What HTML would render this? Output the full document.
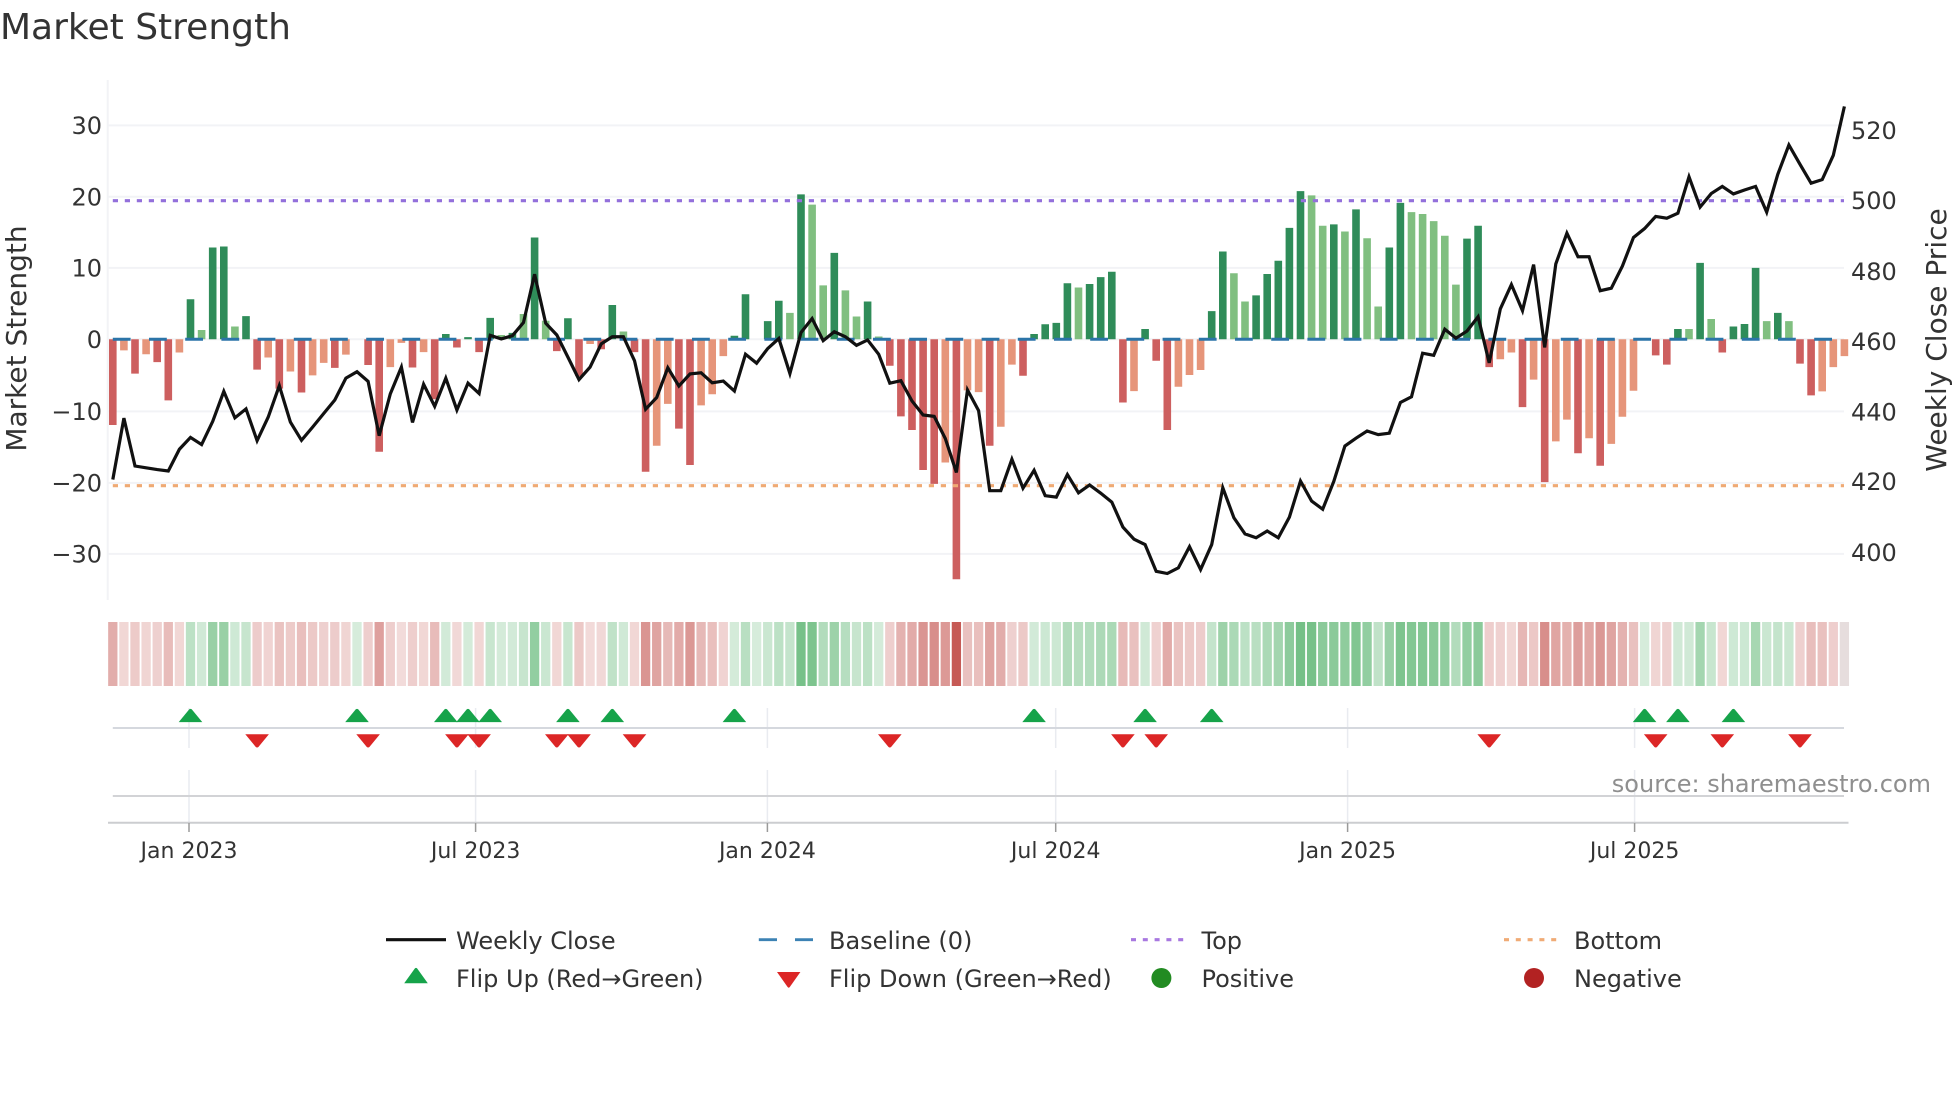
<!DOCTYPE html>
<html lang="en"><head><meta charset="utf-8"><title>Market Strength</title>
<style>
html,body{margin:0;padding:0;background:#fff;width:1960px;height:1102px;overflow:hidden}
svg{display:block}
path,polyline,line{vector-effect:non-scaling-stroke}
text{font-family:"DejaVu Sans","Liberation Sans",sans-serif;fill:#333}
.t{font-size:24px}
.x{font-size:22px;text-anchor:middle}
.l{font-size:24px}
.r{stroke:#c65a55}
.g{stroke:#38a552}
</style></head><body>
<svg width="1960" height="1102" viewBox="0 0 1960 1102" xmlns="http://www.w3.org/2000/svg">
<defs>
<path id="u" d="M-11.8 13.4L-1.3 .7Q0 -.4 1.3 .7L11.8 13.4z" fill="#16a34a"/>
<path id="d" d="M-11.8 0H11.8L1.3 12.7Q0 13.8 -1.3 12.7z" fill="#dc2626"/>
</defs>
<text x="0" y="39" style="font-size:36px">Market Strength</text>

<!-- grid -->
<g stroke="#f2f3f6" stroke-width="2" fill="none">
<line x1="107.7" y1="80" x2="107.7" y2="600"/>
<line x1="108" y1="125.4" x2="1844" y2="125.4"/>
<line x1="108" y1="196.8" x2="1844" y2="196.8"/>
<line x1="108" y1="267.9" x2="1844" y2="267.9"/>
<line x1="108" y1="339.3" x2="1844" y2="339.3"/>
<line x1="108" y1="411.4" x2="1844" y2="411.4"/>
<line x1="108" y1="482.9" x2="1844" y2="482.9"/>
<line x1="108" y1="553.9" x2="1844" y2="553.9"/>
</g>

<!-- bars -->
<g transform="translate(112.8,339.3) scale(11.1,.3571)" fill="none" stroke-width="7.6">
<path stroke="#cd5f5f" d="M0 0V240M2 0V96M4 0V64M5 0V171M13 0V85M15 0V138M17 0V149M20 0V80M23 0V72M24 0V315M27 0V79M29 0V168M31 0V23M33 0V36M40 0V33M42 0V103M44 0V28M47 0V36M48 0V371M51 0V250M52 0V352M70 0V74M71 0V216M72 0V254M73 0V366M74 0V405M76 0V672M79 0V298M82 0V102M91 0V177M94 0V60M95 0V254M124 0V78M127 0V190M129 0V400M132 0V319M134 0V354M139 0V45M140 0V71M145 0V37M152 0V68M153 0V157"/>
<path stroke="#e6957a" d="M1 0V31M3 0V42M6 0V37M14 0V51M16 0V90M18 0V101M19 0V66M21 0V43M25 0V78M26 0V10M28 0V36M43 0V13M49 0V298M50 0V181M53 0V185M54 0V154M55 0V47M75 0V345M77 0V143M78 0V148M80 0V245M81 0V71M92 0V145M96 0V133M97 0V100M98 0V86M125 0V56M126 0V37M128 0V113M130 0V286M131 0V225M133 0V277M135 0V293M136 0V217M137 0V144M154 0V146M155 0V78M156 0V47"/>
<path stroke="#2f8c59" d="M7 0V-112M9 0V-257M10 0V-260M12 0V-65M30 0V-15M32 0V-6M34 0V-60M36 0V-18M38 0V-285M41 0V-59M45 0V-96M56 0V-10M57 0V-126M59 0V-51M60 0V-108M62 0V-406M65 0V-242M68 0V-106M83 0V-15M84 0V-42M85 0V-46M86 0V-157M88 0V-155M89 0V-174M90 0V-189M93 0V-29M99 0V-79M100 0V-246M103 0V-123M104 0V-183M105 0V-220M106 0V-312M107 0V-415M110 0V-322M112 0V-364M115 0V-257M116 0V-382M122 0V-282M123 0V-318M141 0V-29M143 0V-214M146 0V-36M147 0V-43M148 0V-200M150 0V-74"/>
<path stroke="#80bf80" d="M8 0V-26M11 0V-36M35 0V-12M37 0V-71M39 0V-52M46 0V-22M61 0V-74M63 0V-377M64 0V-151M66 0V-137M67 0V-64M69 0V-8M87 0V-145M101 0V-185M102 0V-106M108 0V-403M109 0V-318M111 0V-302M113 0V-283M114 0V-92M117 0V-356M118 0V-351M119 0V-331M120 0V-290M121 0V-153M142 0V-29M144 0V-57M149 0V-51M151 0V-51"/>
</g>

<!-- reference lines -->
<line x1="112.8" y1="339.3" x2="1844" y2="339.3" stroke="#2b74a8" stroke-width="3" stroke-dasharray="17.8 18.4"/>
<line x1="112.8" y1="200.7" x2="1844" y2="200.7" stroke="#9370db" stroke-width="3.2" stroke-dasharray="5.2 6.8"/>
<line x1="112.8" y1="485.7" x2="1844" y2="485.7" stroke="#efaa74" stroke-width="3.2" stroke-dasharray="5.2 6.8"/>

<!-- price line -->
<g transform="translate(112.8,60) scale(11.1,.3571)">
<polyline fill="none" stroke="#111" stroke-width="3.2" stroke-linejoin="miter" points="0,1175 1,1003 2,1137 3,1142 4,1147 5,1151 6,1090 7,1057 8,1077 9,1012 10,928 11,1002 12,977 13,1066 14,1000 15,912 16,1014 17,1065 18,1028 19,990 20,952 21,891 22,873 23,900 24,1052 25,935 26,860 27,1015 28,908 29,970 30,891 31,980 32,905 33,934 34,771 35,781 36,772 37,735 38,600 39,737 40,770 41,832 42,895 43,860 44,795 45,775 46,775 47,842 48,978 49,945 50,862 51,913 52,879 53,876 54,904 55,899 56,927 57,824 58,849 59,808 60,780 61,878 62,763 63,724 64,786 65,761 66,775 67,799 68,784 69,824 70,905 71,898 72,955 73,994 74,998 75,1060 76,1155 77,924 78,982 79,1206 80,1206 81,1118 82,1199 83,1149 84,1220 85,1224 86,1161 87,1212 88,1190 89,1213 90,1238 91,1308 92,1342 93,1357 94,1432 95,1438 96,1422 97,1363 98,1427 99,1357 100,1198 101,1282 102,1327 103,1338 104,1319 105,1338 106,1280 107,1179 108,1235 109,1258 110,1180 111,1081 112,1059 113,1039 114,1049 115,1045 116,959 117,943 118,821 119,827 120,754 121,779 122,759 123,719 124,848 125,697 126,629 127,702 128,573 129,805 130,571 131,485 132,551 133,551 134,646 135,639 136,577 137,497 138,472 139,438 140,443 141,429 142,327 143,412 144,374 145,354 146,375 147,364 148,354 149,426 150,320 151,238 152,292 153,345 154,335 155,267 156,130"/>
</g>

<!-- y ticks -->
<g class="t" text-anchor="end">
<text x="102" y="134" class="t">30</text>
<text x="102" y="205.4" class="t">20</text>
<text x="102" y="276.5" class="t">10</text>
<text x="102" y="348" class="t">0</text>
<text x="102" y="420" class="t">−10</text>
<text x="102" y="491.5" class="t">−20</text>
<text x="102" y="562.5" class="t">−30</text>
</g>
<g>
<text x="1851" y="139" class="t">520</text>
<text x="1851" y="209" class="t">500</text>
<text x="1851" y="280" class="t">480</text>
<text x="1851" y="350" class="t">460</text>
<text x="1851" y="420.4" class="t">440</text>
<text x="1851" y="490" class="t">420</text>
<text x="1851" y="561" class="t">400</text>
</g>
<text transform="translate(26,338.5) rotate(-90)" text-anchor="middle" style="font-size:28px">Market Strength</text>
<text transform="translate(1946,340) rotate(-90)" text-anchor="middle" style="font-size:28px">Weekly Close Price</text>

<!-- heat strip -->
<g transform="translate(112.8,622) scale(11.1,1)" fill="none" stroke-width="9.3">
<path class="r" opacity=".49" d="M0 0V64"/><path class="r" opacity=".24" d="M1 0V64"/><path class="r" opacity=".31" d="M2 0V64"/><path class="r" opacity=".25" d="M3 0V64"/><path class="r" opacity=".28" d="M4 0V64"/><path class="r" opacity=".4" d="M5 0V64"/><path class="r" opacity=".24" d="M6 0V64"/>
<path class="g" opacity=".33" d="M7 0V64"/><path class="g" opacity=".23" d="M8 0V64"/><path class="g" opacity=".51" d="M9 0V64"/><path class="g" opacity=".51" d="M10 0V64"/><path class="g" opacity=".24" d="M11 0V64"/><path class="g" opacity=".28" d="M12 0V64"/>
<path class="r" opacity=".3" d="M13 0V64"/><path class="r" opacity=".26" d="M14 0V64"/><path class="r" opacity=".36" d="M15 0V64"/><path class="r" opacity=".31" d="M16 0V64"/><path class="r" opacity=".38" d="M17 0V64"/><path class="r" opacity=".32" d="M18 0V64"/><path class="r" opacity=".28" d="M19 0V64"/><path class="r" opacity=".3" d="M20 0V64"/><path class="r" opacity=".25" d="M21 0V64"/>
<path class="g" opacity=".2" d="M22 0V64"/>
<path class="r" opacity=".29" d="M23 0V64"/><path class="r" opacity=".57" d="M24 0V64"/><path class="r" opacity=".29" d="M25 0V64"/><path class="r" opacity=".21" d="M26 0V64"/><path class="r" opacity=".29" d="M27 0V64"/><path class="r" opacity=".24" d="M28 0V64"/><path class="r" opacity=".4" d="M29 0V64"/>
<path class="g" opacity=".22" d="M30 0V64"/><path class="r" opacity=".23" d="M31 0V64"/><path class="g" opacity=".21" d="M32 0V64"/><path class="r" opacity=".24" d="M33 0V64"/>
<path class="g" opacity=".27" d="M34 0V64"/><path class="g" opacity=".21" d="M35 0V64"/><path class="g" opacity=".22" d="M36 0V64"/><path class="g" opacity=".28" d="M37 0V64"/><path class="g" opacity=".54" d="M38 0V64"/><path class="g" opacity=".26" d="M39 0V64"/>
<path class="r" opacity=".24" d="M40 0V64"/><path class="g" opacity=".27" d="M41 0V64"/><path class="r" opacity=".32" d="M42 0V64"/><path class="r" opacity=".22" d="M43 0V64"/><path class="r" opacity=".23" d="M44 0V64"/><path class="g" opacity=".31" d="M45 0V64"/><path class="g" opacity=".23" d="M46 0V64"/>
<path class="r" opacity=".24" d="M47 0V64"/><path class="r" opacity=".64" d="M48 0V64"/><path class="r" opacity=".55" d="M49 0V64"/><path class="r" opacity=".42" d="M50 0V64"/><path class="r" opacity=".5" d="M51 0V64"/><path class="r" opacity=".62" d="M52 0V64"/><path class="r" opacity=".42" d="M53 0V64"/><path class="r" opacity=".38" d="M54 0V64"/><path class="r" opacity=".26" d="M55 0V64"/>
<path class="g" opacity=".21" d="M56 0V64"/><path class="g" opacity=".35" d="M57 0V64"/><path class="g" opacity=".2" d="M58 0V64"/><path class="g" opacity=".26" d="M59 0V64"/><path class="g" opacity=".33" d="M60 0V64"/><path class="g" opacity=".29" d="M61 0V64"/><path class="g" opacity=".68" d="M62 0V64"/><path class="g" opacity=".65" d="M63 0V64"/><path class="g" opacity=".38" d="M64 0V64"/><path class="g" opacity=".49" d="M65 0V64"/><path class="g" opacity=".36" d="M66 0V64"/><path class="g" opacity=".28" d="M67 0V64"/><path class="g" opacity=".33" d="M68 0V64"/><path class="g" opacity=".21" d="M69 0V64"/>
<path class="r" opacity=".29" d="M70 0V64"/><path class="r" opacity=".46" d="M71 0V64"/><path class="r" opacity=".5" d="M72 0V64"/><path class="r" opacity=".64" d="M73 0V64"/><path class="r" opacity=".68" d="M74 0V64"/><path class="r" opacity=".61" d="M75 0V64"/><path class="r" opacity="1" d="M76 0V64"/><path class="r" opacity=".37" d="M77 0V64"/><path class="r" opacity=".38" d="M78 0V64"/><path class="r" opacity=".55" d="M79 0V64"/><path class="r" opacity=".49" d="M80 0V64"/><path class="r" opacity=".28" d="M81 0V64"/><path class="r" opacity=".32" d="M82 0V64"/>
<path class="g" opacity=".22" d="M83 0V64"/><path class="g" opacity=".25" d="M84 0V64"/><path class="g" opacity=".25" d="M85 0V64"/><path class="g" opacity=".39" d="M86 0V64"/><path class="g" opacity=".37" d="M87 0V64"/><path class="g" opacity=".38" d="M88 0V64"/><path class="g" opacity=".41" d="M89 0V64"/><path class="g" opacity=".42" d="M90 0V64"/>
<path class="r" opacity=".41" d="M91 0V64"/><path class="r" opacity=".37" d="M92 0V64"/><path class="g" opacity=".23" d="M93 0V64"/><path class="r" opacity=".27" d="M94 0V64"/><path class="r" opacity=".5" d="M95 0V64"/><path class="r" opacity=".36" d="M96 0V64"/><path class="r" opacity=".32" d="M97 0V64"/><path class="r" opacity=".3" d="M98 0V64"/>
<path class="g" opacity=".29" d="M99 0V64"/><path class="g" opacity=".49" d="M100 0V64"/><path class="g" opacity=".42" d="M101 0V64"/><path class="g" opacity=".33" d="M102 0V64"/><path class="g" opacity=".35" d="M103 0V64"/><path class="g" opacity=".42" d="M104 0V64"/><path class="g" opacity=".46" d="M105 0V64"/><path class="g" opacity=".57" d="M106 0V64"/><path class="g" opacity=".69" d="M107 0V64"/><path class="g" opacity=".68" d="M108 0V64"/><path class="g" opacity=".58" d="M109 0V64"/><path class="g" opacity=".58" d="M110 0V64"/><path class="g" opacity=".56" d="M111 0V64"/><path class="g" opacity=".63" d="M112 0V64"/><path class="g" opacity=".54" d="M113 0V64"/><path class="g" opacity=".31" d="M114 0V64"/><path class="g" opacity=".51" d="M115 0V64"/><path class="g" opacity=".65" d="M116 0V64"/><path class="g" opacity=".62" d="M117 0V64"/><path class="g" opacity=".62" d="M118 0V64"/><path class="g" opacity=".59" d="M119 0V64"/><path class="g" opacity=".55" d="M120 0V64"/><path class="g" opacity=".38" d="M121 0V64"/><path class="g" opacity=".54" d="M122 0V64"/><path class="g" opacity=".58" d="M123 0V64"/>
<path class="r" opacity=".29" d="M124 0V64"/><path class="r" opacity=".27" d="M125 0V64"/><path class="r" opacity=".24" d="M126 0V64"/><path class="r" opacity=".43" d="M127 0V64"/><path class="r" opacity=".33" d="M128 0V64"/><path class="r" opacity=".68" d="M129 0V64"/><path class="r" opacity=".54" d="M130 0V64"/><path class="r" opacity=".47" d="M131 0V64"/><path class="r" opacity=".58" d="M132 0V64"/><path class="r" opacity=".53" d="M133 0V64"/><path class="r" opacity=".62" d="M134 0V64"/><path class="r" opacity=".55" d="M135 0V64"/><path class="r" opacity=".46" d="M136 0V64"/><path class="r" opacity=".37" d="M137 0V64"/>
<path class="g" opacity=".2" d="M138 0V64"/><path class="r" opacity=".25" d="M139 0V64"/><path class="r" opacity=".28" d="M140 0V64"/><path class="g" opacity=".23" d="M141 0V64"/><path class="g" opacity=".23" d="M142 0V64"/><path class="g" opacity=".45" d="M143 0V64"/><path class="g" opacity=".27" d="M144 0V64"/><path class="r" opacity=".24" d="M145 0V64"/>
<path class="g" opacity=".24" d="M146 0V64"/><path class="g" opacity=".25" d="M147 0V64"/><path class="g" opacity=".44" d="M148 0V64"/><path class="g" opacity=".26" d="M149 0V64"/><path class="g" opacity=".29" d="M150 0V64"/><path class="g" opacity=".26" d="M151 0V64"/>
<path class="r" opacity=".28" d="M152 0V64"/><path class="r" opacity=".39" d="M153 0V64"/><path class="r" opacity=".37" d="M154 0V64"/><path class="r" opacity=".29" d="M155 0V64"/><path class="r" style="stroke:#b09090" opacity=".3" d="M156 0V64"/>
</g>

<!-- flip panel grid -->
<g stroke="#e9ebf0" stroke-width="1.5">
<line x1="189" y1="708" x2="189" y2="748"/><line x1="475.6" y1="708" x2="475.6" y2="748"/><line x1="767.4" y1="708" x2="767.4" y2="748"/><line x1="1055.7" y1="708" x2="1055.7" y2="748"/><line x1="1347.6" y1="708" x2="1347.6" y2="748"/><line x1="1634.6" y1="708" x2="1634.6" y2="748"/>
<line x1="189" y1="770" x2="189" y2="823"/><line x1="475.6" y1="770" x2="475.6" y2="823"/><line x1="767.4" y1="770" x2="767.4" y2="823"/><line x1="1055.7" y1="770" x2="1055.7" y2="823"/><line x1="1347.6" y1="770" x2="1347.6" y2="823"/><line x1="1634.6" y1="770" x2="1634.6" y2="823"/>
</g>
<line x1="112.8" y1="728" x2="1844" y2="728" stroke="#d5d8de" stroke-width="2"/>
<line x1="112.8" y1="796" x2="1844" y2="796" stroke="#d2d3d6" stroke-width="2"/>
<line x1="108" y1="822.7" x2="1848.5" y2="822.7" stroke="#cccdd0" stroke-width="2"/>
<g stroke="#9a9a9a" stroke-width="1.5">
<line x1="189" y1="823" x2="189" y2="832"/><line x1="475.6" y1="823" x2="475.6" y2="832"/><line x1="767.4" y1="823" x2="767.4" y2="832"/><line x1="1055.7" y1="823" x2="1055.7" y2="832"/><line x1="1347.6" y1="823" x2="1347.6" y2="832"/><line x1="1634.6" y1="823" x2="1634.6" y2="832"/>
</g>

<!-- flip markers -->
<use href="#u" x="190.5" y="708.7"/><use href="#u" x="357" y="708.7"/><use href="#u" x="445.8" y="708.7"/><use href="#u" x="468" y="708.7"/><use href="#u" x="490.2" y="708.7"/><use href="#u" x="567.9" y="708.7"/><use href="#u" x="612.3" y="708.7"/><use href="#u" x="734.4" y="708.7"/><use href="#u" x="1034.1" y="708.7"/><use href="#u" x="1145.1" y="708.7"/><use href="#u" x="1211.7" y="708.7"/><use href="#u" x="1644.6" y="708.7"/><use href="#u" x="1677.9" y="708.7"/><use href="#u" x="1733.4" y="708.7"/>
<use href="#d" x="257.1" y="734.3"/><use href="#d" x="368.1" y="734.3"/><use href="#d" x="456.9" y="734.3"/><use href="#d" x="479.1" y="734.3"/><use href="#d" x="556.8" y="734.3"/><use href="#d" x="579" y="734.3"/><use href="#d" x="634.5" y="734.3"/><use href="#d" x="889.8" y="734.3"/><use href="#d" x="1122.9" y="734.3"/><use href="#d" x="1156.2" y="734.3"/><use href="#d" x="1489.2" y="734.3"/><use href="#d" x="1655.7" y="734.3"/><use href="#d" x="1722.3" y="734.3"/><use href="#d" x="1800" y="734.3"/>

<!-- x labels -->
<text x="189" y="858" class="x">Jan 2023</text>
<text x="475.6" y="858" class="x">Jul 2023</text>
<text x="767.4" y="858" class="x">Jan 2024</text>
<text x="1055.7" y="858" class="x">Jul 2024</text>
<text x="1347.6" y="858" class="x">Jan 2025</text>
<text x="1634.6" y="858" class="x">Jul 2025</text>

<text x="1931" y="792" text-anchor="end" style="font-size:24px;fill:#8f8f8f">source: sharemaestro.com</text>

<!-- legend -->
<line x1="386" y1="939.7" x2="446" y2="939.7" stroke="#111" stroke-width="3.2"/>
<line x1="758.8" y1="939.7" x2="813" y2="939.7" stroke="#3c82b4" stroke-width="2.8" stroke-dasharray="18.2 18"/>
<line x1="1131" y1="939.7" x2="1187" y2="939.7" stroke="#a878e0" stroke-width="3.2" stroke-dasharray="5 6.8"/>
<line x1="1504" y1="939.7" x2="1559" y2="939.7" stroke="#f0ab76" stroke-width="3.2" stroke-dasharray="5 6.8"/>
<path d="M404.2 983.3L414.8 968.5Q416 967.2 417.2 968.5L427.8 983.3z" fill="#16a34a"/>
<path d="M777 972H800.4L789.8 987Q788.7 988.4 787.6 987z" fill="#dc2626"/>
<circle cx="1161.4" cy="978" r="10" fill="#228b22"/>
<circle cx="1534" cy="978" r="10" fill="#b22222"/>
<text x="456" y="949" class="l">Weekly Close</text>
<text x="829" y="949" class="l">Baseline (0)</text>
<text x="1201.5" y="949" class="l">Top</text>
<text x="1574" y="949" class="l">Bottom</text>
<text x="456" y="987" class="l">Flip Up (Red→Green)</text>
<text x="829" y="987" class="l">Flip Down (Green→Red)</text>
<text x="1201.5" y="987" class="l">Positive</text>
<text x="1574" y="987" class="l">Negative</text>
</svg>
</body></html>
